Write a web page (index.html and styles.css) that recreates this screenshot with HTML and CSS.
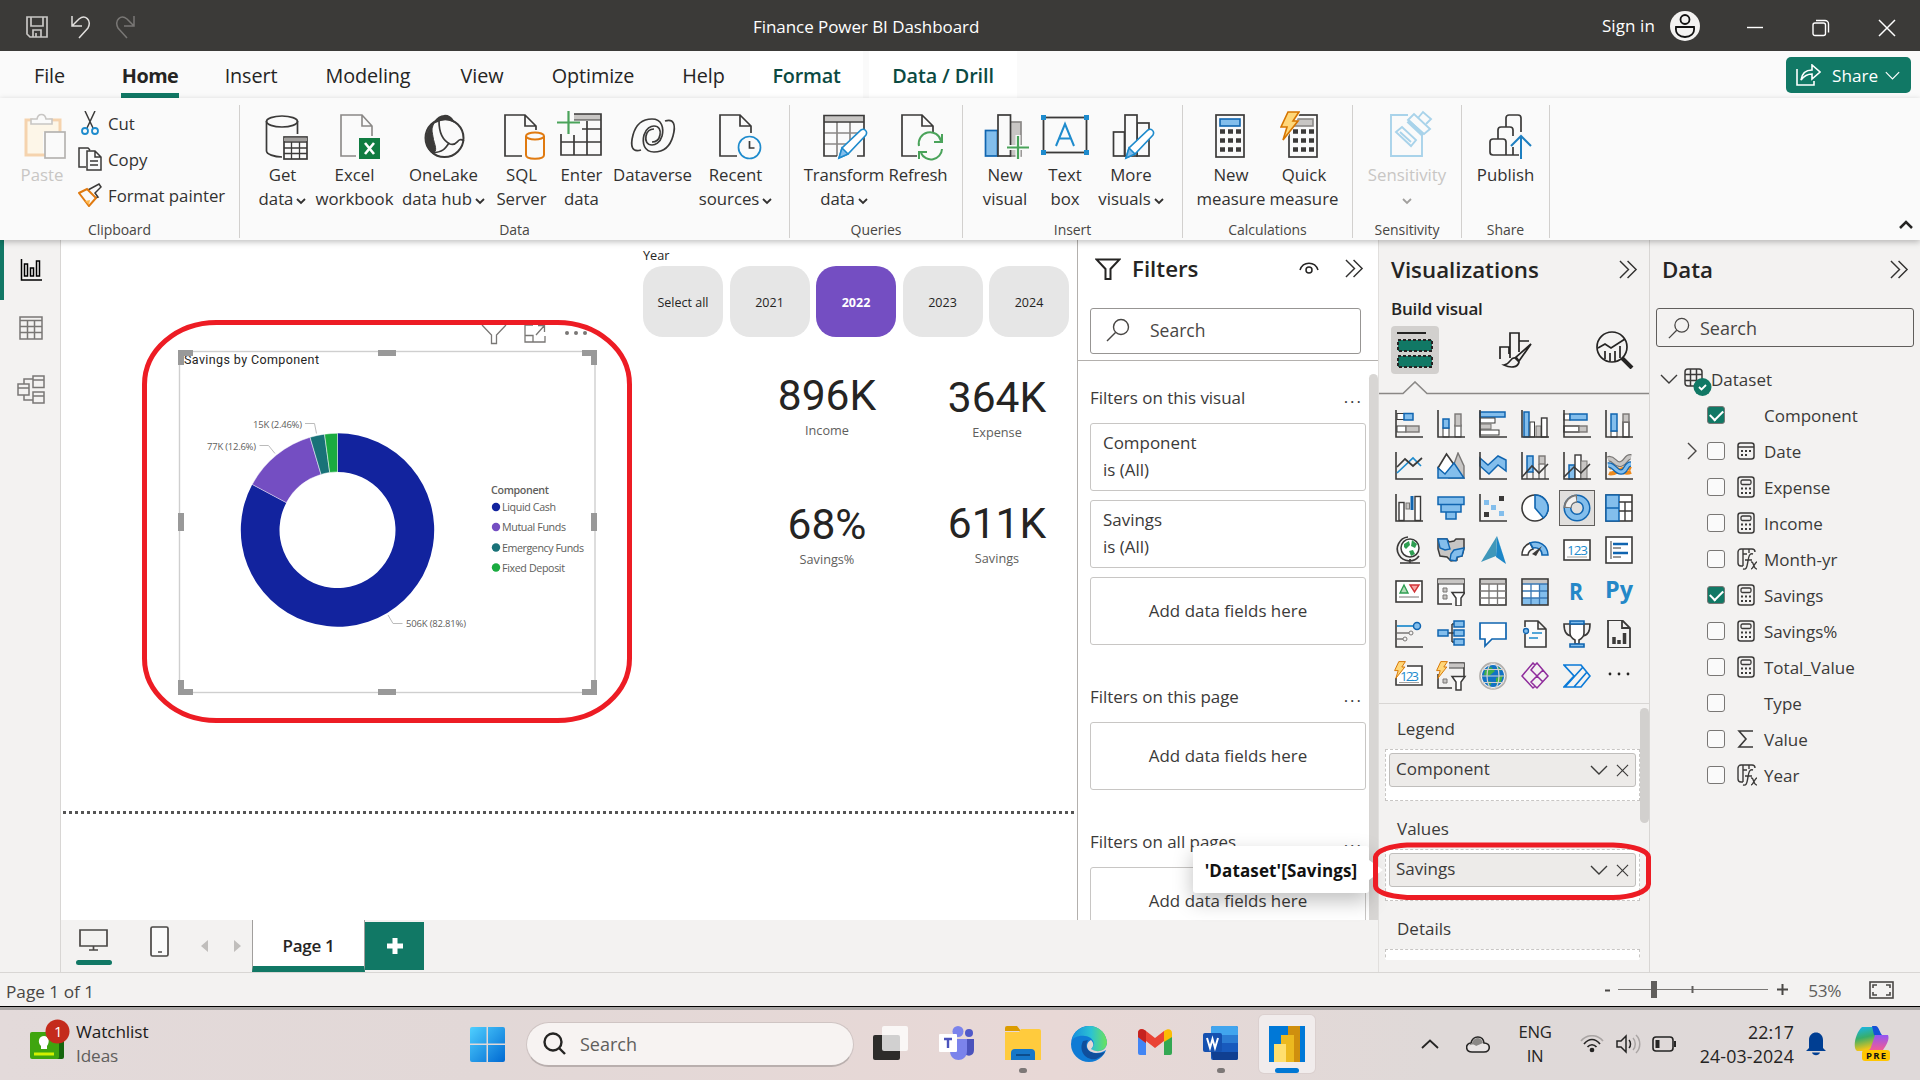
FILE: index.html
```html
<!DOCTYPE html>
<html lang="en">
<head>
<meta charset="utf-8">
<title>Finance Power BI Dashboard</title>
<link rel="stylesheet" href="styles.css">
</head>
<body>
<svg class="defs" width="0" height="0">
  <symbol id="chev" viewBox="0 0 18 10"><path d="M1 1l8 8 8-8" fill="none" stroke="currentColor" stroke-width="1.4"/></symbol>
  <symbol id="chev-s" viewBox="0 0 10 8"><path d="M1 2l4 4 4-4" fill="none" stroke="currentColor" stroke-width="1.8"/></symbol>
  <symbol id="dbl" viewBox="0 0 20 20"><path d="M1 1l9 9-9 9M9 1l9 9-9 9" fill="none" stroke="currentColor" stroke-width="1.5"/></symbol>
  <symbol id="mag" viewBox="0 0 24 24"><circle cx="15" cy="9" r="7.5" fill="none" stroke="currentColor" stroke-width="1.4"/><path d="M9.500 14.500L1 23" stroke="currentColor" stroke-width="1.4"/></symbol>
  <symbol id="x" viewBox="0 0 14 14"><path d="M1 1l12 12M13 1L1 13" fill="none" stroke="currentColor" stroke-width="1.2"/></symbol>
  <symbol id="axes" viewBox="0 0 28 28"><path d="M1 0V27H28" fill="none" stroke="#3b3a39" stroke-width="1.600"/></symbol>
  <symbol id="calc" viewBox="0 0 18 22"><rect x="1" y="1" width="16" height="20" rx="2.500" fill="none" stroke="#3b3a39" stroke-width="1.500"/><rect x="4" y="4" width="10" height="4.500" rx="1.500" fill="none" stroke="#3b3a39" stroke-width="1.300"/><path d="M4 12.500h2m2 0h2m2 0h2M4 17h2m2 0h2m2 0h2" stroke="#3b3a39" stroke-width="2.200"/></symbol>
  <symbol id="fx" viewBox="0 0 22 22"><path d="M6 18H4a3 3 0 0 1-3-3V4a3 3 0 0 1 3-3H15a3 3 0 0 1 3 3M6 1V18M6 6h4M12 1v4" fill="none" stroke="#3b3a39" stroke-width="1.400"/><path d="M6 21c4 1 4-3 5-8 .8-5 1.500-8 5-7M8 12h7M14 14c3-1 2 7 6 7M20 14c-2 0-4 7-6 7" fill="none" stroke="#3b3a39" stroke-width="1.400"/></symbol>
  <symbol id="pencil" viewBox="0 0 32 32"><path d="M2 30l3-10L24 2c3-2 7 1 5 5L11 26Z" fill="#fff" stroke="#1e8bcd" stroke-width="1.600"/><path d="M2 30l3-10 6 6Z" fill="#83beec" stroke="#1e8bcd" stroke-width="1.500"/></symbol>
  <symbol id="bolt" viewBox="0 0 20 30"><path d="M8 1H19L13 10H18L3 29L7 16H1Z" fill="#ffd779" stroke="#d67500" stroke-width="1.600"/></symbol>
  <symbol id="calc-l" viewBox="0 0 30 44"><rect x="1" y="1" width="28" height="42" fill="#fafafa" stroke="#3b3a39" stroke-width="1.700"/><path d="M5 17.500h5m3 0h5m3 0h5M5 26.500h5m3 0h5m3 0h5M5 35.500h5m3 0h5m3 0h5" stroke="#3b3a39" stroke-width="4.500"/></symbol>
</svg>

<header class="titlebar">
  <div class="quick">
    <svg width="24" height="24" viewBox="0 0 24 24" fill="none" stroke="#c8c6c4" stroke-width="1.700"><path d="M2 2H22V22H5L2 19ZM6 2V11H18V2M8 22V15H16V22M11 18v4"/></svg>
    <svg width="24" height="24" viewBox="0 0 24 24" fill="none" stroke="#e1dfdd" stroke-width="1.500"><path d="M2 1V11H12M2 11L9 4C15 -1 22 5 18 13L9 23"/></svg>
    <svg class="redo" width="24" height="24" viewBox="0 0 24 24" fill="none" stroke="#797775" stroke-width="1.500"><path d="M20 1V11H10M20 11L13 4C7 -1 0 5 4 13L13 23"/></svg>
  </div>
  <div class="doc-title">Finance Power BI Dashboard</div>
  <div class="account"><span>Sign in</span>
    <svg width="30" height="30" viewBox="0 0 30 30"><circle cx="15" cy="15" r="15" fill="#f3f2f1"/><g fill="none" stroke="#111" stroke-width="1.800"><circle cx="15" cy="8.500" r="4.500"/><path d="M6 16H24C25 23 20 26 15 26S5 23 6 16Z"/></g></svg></div>
  <div class="winctl">
    <svg width="18" height="18" viewBox="0 0 18 18"><path d="M1 8.500H17" stroke="#fff" stroke-width="1.400"/></svg>
    <svg width="18" height="18" viewBox="0 0 18 18" fill="none" stroke="#fff" stroke-width="1.400"><rect x="1" y="4" width="12.500" height="12.500" rx="2"/><path d="M4 1.500H13a3.500 3.500 0 0 1 3.500 3.500V13.500"/></svg>
    <svg width="18" height="18" viewBox="0 0 18 18"><path d="M1 1L17 17M17 1L1 17" stroke="#fff" stroke-width="1.500"/></svg>
  </div>
</header>

<nav class="tabs">
  <span class="tab t-file">File</span><span class="tab t-home"><b>Home</b></span><span class="tab t-insert">Insert</span><span class="tab t-model">Modeling</span><span class="tab t-view">View</span><span class="tab t-opt">Optimize</span><span class="tab t-help">Help</span><span class="tab t-format ctx">Format</span><span class="tab t-drill ctx">Data / Drill</span>
  <div class="share-btn"><svg width="25" height="22" viewBox="0 0 25 22" fill="none" stroke="#fff" stroke-width="1.600"><path d="M1 5V21H18V17M5 16C6 9 10 6 16 6V1L24 8L16 15V10C11 10 8 12 5 16Z"/></svg><span>Share</span><svg width="15" height="9"><use href="#chev"/></svg></div>
</nav>

<section class="ribbon">
  <div class="group g-clip">
    <div class="tools">
      <div class="btn b-paste off"><svg viewBox="0 0 54 54"><path d="M10 12H44V22H28V44H10Z" fill="#fdf6e8"/><path d="M18 10H11V45H30M34 10H45V22" fill="none" stroke="#f5d3ae" stroke-width="3"/><path d="M16 14V9H22C23 3 30 3 31 9H37V14Z" fill="#fafafa" stroke="#c8c6c4" stroke-width="1.600"/><rect x="30" y="22" width="20" height="26" fill="#fafafa" stroke="#b5b3b1" stroke-width="1.700"/></svg><span>Paste</span></div>
      <div class="cliplist">
        <div><svg width="24" height="24" viewBox="0 0 24 24" fill="none" stroke="#3b3a39" stroke-width="1.500"><path d="M7 0L15 17M17 0L9 17"/><g stroke="#1e8bcd" stroke-width="1.800"><circle cx="7" cy="20" r="3"/><circle cx="17" cy="20" r="3"/></g></svg>Cut</div>
        <div><svg width="24" height="24" viewBox="0 0 24 24" fill="none" stroke="#3b3a39" stroke-width="1.500"><path d="M8 20H1V1H10L12 3M9 4H17L23 10V23H9ZM17 4V10H23M12 14H20M12 18H20"/></svg>Copy</div>
        <div><svg width="24" height="24" viewBox="0 0 24 24" fill="#fafafa" stroke="#3b3a39" stroke-width="1.500"><path d="M10 7L21 1L23 4L17 10L20 14L13 16Z"/><path d="M1 10L9 6L18 15L11 23Z" stroke="#e07a10" stroke-width="2"/><path d="M7 18l5-1-1 5Z" fill="#ffb74d" stroke="none"/></svg>Format painter</div>
      </div>
    </div>
    <div class="cap">Clipboard</div>
  </div>

  <div class="group g-data">
    <div class="tools">
      <div class="btn w70"><svg viewBox="0 0 54 54" fill="none" stroke="#3b3a39" stroke-width="1.700"><ellipse cx="26" cy="11.500" rx="15.500" ry="5.500"/><path d="M10.500 11V41C10.500 44 18 47 26 47M41.500 11V24"/><rect x="28" y="27" width="23" height="22" fill="#fafafa"/><path d="M28 29.500H51" stroke="#a19f9d" stroke-width="3.500"/><path d="M28 32H51M28 38H51M28 43.500H51M35.500 32V49M43.500 32V49" stroke-width="1.300"/></svg><span>Get<br>data<svg class="dd"><use href="#chev-s"/></svg></span></div>
      <div class="btn w74"><svg viewBox="0 0 54 54"><path d="M28 46H13V5H34L44 16V26M34 5V16H44" fill="none" stroke="#8a8886" stroke-width="1.600"/><rect x="31" y="28" width="21" height="21" fill="#107c41"/><path d="M37 33l9 11M46 33l-9 11" stroke="#fff" stroke-width="2.600"/></svg><span>Excel<br>workbook</span></div>
      <div class="btn w104"><svg viewBox="2 0 54 54"><circle cx="29.500" cy="28" r="19" fill="#fafafa" stroke="#3b3a39" stroke-width="2"/><path d="M19 13A20 20 0 0 0 17 43C24 42 19 34 18 27S16 20 19 13Z" fill="#3b3a39" stroke="#3b3a39"/><path d="M20 12C25 4 34 4 38 11C32 8 26 9 20 12Z" fill="#3b3a39" stroke="#3b3a39" stroke-width="2"/><path d="M24 11C24 25 29 31 35 34C43 37 42 26 49 31M17 43C28 42 30 39 34 33" fill="none" stroke="#3b3a39" stroke-width="1.700"/></svg><span>OneLake<br>data hub<svg class="dd"><use href="#chev-s"/></svg></span></div>
      <div class="btn w52"><svg viewBox="1 0 54 54" fill="none" stroke="#3b3a39" stroke-width="1.700"><path d="M28 46H11V5H31L42 16V20M31 5V16H42"/><g fill="#fafafa" stroke="#e07a10" stroke-width="2"><path d="M32 26V45C32 50 50 50 50 45V26"/><ellipse cx="41" cy="26" rx="9" ry="3.500"/></g></svg><span>SQL<br>Server</span></div>
      <div class="btn w68"><svg viewBox="1 0 54 54" fill="none" stroke="#3b3a39" stroke-width="1.700"><path d="M20 7H47" stroke="#c8c6c4" stroke-width="6"/><path d="M7 24V45H47V4H20M7 32H47M20 25V45M33 11V45M28 19H47" /><path d="M20 10H47" stroke-width="1"/><path d="M14.500 1V24M3 12.500H26" stroke="#4aa35a" stroke-width="2.200"/></svg><span>Enter<br>data</span></div>
      <div class="btn w74"><svg viewBox="0 0 54 54" fill="none" stroke="#3b3a39" stroke-width="1.700"><path d="M15 40C6 43 4 36 7 25C10 14 17 9 26 9C36 9 38 18 36 26C34 33 29 35 26 35C21 35 19 31 20 26C21 21 24 19 28 19"/><path d="M39 11C48 8 50 15 47 26C44 37 37 42 28 42C18 42 16 33 18 25C20 18 25 16 28 16C33 16 35 20 34 25C33 30 30 32 26 32"/></svg><span>Dataverse</span></div>
      <div class="btn w92"><svg viewBox="1 0 54 54" fill="none" stroke="#3b3a39" stroke-width="1.700"><path d="M29 46H12V5H32L43 16V23M32 5V16H43"/><circle cx="41.500" cy="37.500" r="11" fill="#fafafa" stroke="#1e8bcd"/><path d="M41.500 31V38H46.500"/></svg><span>Recent<br>sources<svg class="dd"><use href="#chev-s"/></svg></span></div>
    </div>
    <div class="cap">Data</div>
  </div>

  <div class="group g-query">
    <div class="tools">
      <div class="btn w80"><svg viewBox="0 0 54 54" fill="none" stroke="#3b3a39" stroke-width="1.700"><path d="M7 8.500H47" stroke="#c8c6c4" stroke-width="6"/><path d="M7 23H47M7 34H40M20 12V46M33 12V40" stroke="#8a8886"/><path d="M20 46H7V5.500H47V46H40M7 12H47"/><use href="#pencil" x="20" y="18" width="32" height="32"/></svg><span>Transform<br>data<svg class="dd"><use href="#chev-s"/></svg></span></div>
      <div class="btn w68"><svg viewBox="0 0 54 54" fill="none" stroke="#3b3a39" stroke-width="1.700"><path d="M26 46H11V5H31L42 16V22M31 5V16H42"/><g stroke="#4aa35a" stroke-width="2"><path d="M28 36A11 11 0 0 1 50 31M51 24V32H43M51 39A11 11 0 0 1 30 43M28 49V42H36"/></g></svg><span>Refresh</span></div>
    </div>
    <div class="cap">Queries</div>
  </div>

  <div class="group g-insert">
    <div class="tools">
      <div class="btn w62"><svg viewBox="0 0 54 54" stroke="#3b3a39" stroke-width="1.700" fill="#fafafa"><rect x="7.500" y="20.500" width="12" height="25.500" fill="#83beec" stroke="#1065b0"/><rect x="32" y="12" width="11" height="34" fill="#c8c6c4" stroke="#8a8886"/><rect x="20" y="5" width="12.500" height="41"/><path d="M40 25V49M28 37.500H52" stroke="#fafafa" stroke-width="5"/><path d="M40 26V49M29 37.500H51" stroke="#4aa35a" stroke-width="2.200"/></svg><span>New<br>visual</span></div>
      <div class="btn w58"><svg viewBox="0 0 54 54" fill="none" stroke="#3b3a39" stroke-width="1.800"><rect x="5.500" y="7.500" width="43" height="35"/><path d="M3 5h5v5H3ZM46 5h5v5h-5ZM3 40h5v5H3ZM46 40h5v5h-5Z" fill="#1e8bcd" stroke="none"/><path d="M18 36L27 14L36 36M21 28.500H33" stroke="#1e8bcd" stroke-width="2"/></svg><span>Text<br>box</span></div>
      <div class="btn w74"><svg viewBox="0 0 54 54" stroke="#3b3a39" stroke-width="1.700" fill="#fafafa"><rect x="9.500" y="22" width="11" height="24"/><rect x="33" y="13" width="12" height="33"/><rect x="21" y="5" width="12" height="41"/><use href="#pencil" x="20" y="18" width="32" height="32"/></svg><span>More<br>visuals<svg class="dd"><use href="#chev-s"/></svg></span></div>
    </div>
    <div class="cap">Insert</div>
  </div>

  <div class="group g-calc">
    <div class="tools">
      <div class="btn w73"><svg viewBox="0 0 54 54"><use href="#calc-l" x="11" y="4" width="30" height="44"/><rect x="16" y="9" width="20" height="7" fill="#83beec" stroke="#1065b0" stroke-width="1.600"/></svg><span>New<br>measure</span></div>
      <div class="btn w73"><svg viewBox="1 0 54 54"><use href="#calc-l" x="12" y="4" width="30" height="44"/><rect x="17" y="9" width="20" height="7" fill="#c8c6c4" stroke="#8a8886" stroke-width="1.600"/><path d="M8 3H24L19 14L9 32L6 24Z" fill="#fafafa"/><use href="#bolt" x="4" y="1" width="20" height="30"/></svg><span>Quick<br>measure</span></div>
    </div>
    <div class="cap">Calculations</div>
  </div>

  <div class="group g-sens">
    <div class="tools">
      <div class="btn w108 off"><svg viewBox="0 0 54 54" fill="none" stroke="#a9d3ea" stroke-width="1.900"><path d="M28 5H11V46H42V25M16 22L22 17L36 30L31 36Z M20 22L31 32"/><path d="M28 10L34 4L50 19L44 24Z" fill="#fafafa"/><path d="M28 11L43 25" stroke-width="4"/><path d="M38 8L43 2L51 9L46 14"/></svg><span>Sensitivity<br><svg class="dd solo"><use href="#chev-s"/></svg></span></div>
    </div>
    <div class="cap">Sensitivity</div>
  </div>

  <div class="group g-share">
    <div class="tools">
      <div class="btn w86"><svg viewBox="0 0 54 54" fill="none" stroke="#3b3a39" stroke-width="1.700"><path d="M27 17V8a3 3 0 0 1 3-3h9a3 3 0 0 1 3 3V22M19 29V20a3 3 0 0 1 3-3h9a3 3 0 0 1 3 3V26M34 37V45"/><path d="M40 45H14a3 3 0 0 1-3-3V32a3 3 0 0 1 3-3H24a3 3 0 0 1 3 3V45"/><path d="M42 49V26M32 36L42 26L52 36" stroke="#1e7fc0" stroke-width="2"/></svg><span>Publish</span></div>
    </div>
    <div class="cap">Share</div>
  </div>
  <svg class="collapse" width="14" height="9" viewBox="0 0 14 9"><path d="M1 8l6-6 6 6" fill="none" stroke="#252423" stroke-width="2.500"/></svg>
</section>

<main class="main">
  <aside class="rail">
    <div class="rail-item on"><svg width="22" height="22" viewBox="0 0 22 22" fill="none" stroke="#000" stroke-width="1.500"><path d="M1.500 0V21H22"/><rect x="4.500" y="5" width="3" height="12"/><rect x="10.500" y="9" width="3" height="8"/><rect x="16.500" y="2" width="3" height="15"/></svg></div>
    <div class="rail-item"><svg width="24" height="24" viewBox="0 0 24 24" fill="none" stroke="#797775" stroke-width="1.500"><path d="M1 1H23V23H1ZM1 4.500H23M1 10.500H23M1 16.500H23M8.500 4.500V23M15.500 4.500V23"/></svg></div>
    <div class="rail-item"><svg width="28" height="29" viewBox="0 0 28 29" fill="none" stroke="#797775" stroke-width="1.500"><path d="M16 1H27V12.500H16ZM16 5H27M16 17H27V28H16ZM16 21H27M1 9H12V20H1ZM1 13H12M7 9V4H16M7 20V25H16"/></svg></div>
  </aside>

  <section class="center">
    <div class="workspace">
      <div class="canvas">
        <div class="slicer">
          <div class="slicer-title">Year</div>
          <div class="slicer-row"><span>Select all</span><span>2021</span><span class="on">2022</span><span>2023</span><span>2024</span></div>
        </div>
        <div class="kpi k1"><strong>896K</strong><span>Income</span></div>
        <div class="kpi k2"><strong>364K</strong><span>Expense</span></div>
        <div class="kpi k3"><strong>68%</strong><span>Savings%</span></div>
        <div class="kpi k4"><strong>611K</strong><span>Savings</span></div>
        <svg class="donut" width="500" height="410" viewBox="138 316 500 410">
          <g fill="none" stroke="#797775" stroke-width="1.300"><path d="M482 325L491.500 335V343.500H496.500V335L506 325"/><path d="M533 325H525V342H545V336M525 335.500H533V342M536 335L544 326M538 325.500H544.500V332"/></g>
          <g fill="#797775"><circle cx="567" cy="333" r="2"/><circle cx="576" cy="333" r="2"/><circle cx="585" cy="333" r="2"/></g>
          <rect x="179.500" y="351.500" width="415.500" height="341" fill="none" stroke="#cfcfcf" stroke-width="1.400"/>
          <text x="184" y="364" class="v-title" textLength="135">Savings by Component</text>
          <g fill="#999"><path d="M178 350h15v6h-9v9h-6ZM597 350h-15v6h9v9h6ZM178 695h15v-6h-9v-9h-6ZM597 695h-15v-6h9v-9h6Z"/><path d="M378 350h18v6h-18ZM378 689h18v6h-18ZM178 513h6v18h-6ZM591 513h6v18h-6Z"/></g>
          <g transform="translate(337.500 530)" stroke-width=".5">
            <path d="M0-96.700A96.700 96.700 0 1 1-85.300-45.550L-51.160-27.320A58 58 0 1 0 0-58Z" fill="#12239e"/>
            <path d="M-85.300-45.550A96.700 96.700 0 0 1-27.460-92.720L-16.470-55.610A58 58 0 0 0-51.160-27.320Z" fill="#744ec2" stroke="#fff"/>
            <path d="M-27.460-92.720A96.700 96.700 0 0 1-12.960-95.830L-7.770-57.480A58 58 0 0 0-16.470-55.610Z" fill="#197278" stroke="#fff"/>
            <path d="M-12.960-95.830A96.700 96.700 0 0 1 0-96.700V-58A58 58 0 0 0-7.770-57.480Z" fill="#1aab40" stroke="#fff"/>
          </g>
          <g fill="none" stroke="#bbb" stroke-width="1"><path d="M305 423.500h9.500l2 10M259.500 445.500h9l6.500 8M388 615l5 8.500h9.500"/></g>
          <g class="lbl"><text x="253" y="428" textLength="49">15K (2.46%)</text><text x="207" y="450" textLength="49">77K (12.6%)</text><text x="406" y="627" textLength="60">506K (82.81%)</text></g>
          <g class="lgd"><text x="491" y="494" class="b" textLength="58">Component</text><text x="502" y="511" textLength="54">Liquid Cash</text><text x="502" y="531" textLength="64">Mutual Funds</text><text x="502" y="552" textLength="82">Emergency Funds</text><text x="502" y="572" textLength="63">Fixed Deposit</text></g>
          <circle cx="496" cy="507" r="4.200" fill="#12239e"/><circle cx="496" cy="527" r="4.200" fill="#744ec2"/><circle cx="496" cy="547.500" r="4.200" fill="#197278"/><circle cx="496" cy="567.500" r="4.200" fill="#1aab40"/>
          <rect x="144.500" y="322.500" width="485" height="398" rx="72" ry="62" fill="none" stroke="#ed1c24" stroke-width="5"/>
        </svg>
        <div class="page-edge"></div>
      </div>

      <aside class="filters">
        <div class="f-head">
          <svg width="26" height="22" viewBox="0 0 26 22"><path d="M1.500 1.500H24.500L15.500 11V21H10.500V11Z" fill="none" stroke="#252423" stroke-width="2"/></svg>
          <h2>Filters</h2>
          <svg class="eye" width="20" height="14" viewBox="0 0 20 14" fill="none" stroke="#252423" stroke-width="1.500"><path d="M1 8C4 -1 16 -1 19 8"/><circle cx="10" cy="8" r="3"/></svg>
          <svg width="19" height="19"><use href="#dbl"/></svg>
        </div>
        <div class="f-search"><svg width="24" height="24"><use href="#mag"/></svg>Search</div>
        <div class="f-body">
          <div class="f-title"><span>Filters on this visual</span><i>...</i></div>
          <div class="card">Component<br>is (All)</div>
          <div class="card">Savings<br>is (All)</div>
          <div class="card add">Add data fields here</div>
          <div class="f-title gap"><span>Filters on this page</span><i>...</i></div>
          <div class="card add">Add data fields here</div>
          <div class="f-title gap"><span>Filters on all pages</span><i>...</i></div>
          <div class="card add">Add data fields here</div>
        </div>
      </aside>
    </div>
    <div class="pagebar">
      <svg class="desk" width="36" height="38" viewBox="0 0 36 38"><path d="M4 2H31V18H4ZM17.500 18V22M13 22H22" fill="none" stroke="#4a4846" stroke-width="1.700"/><rect y="32" width="36" height="5" rx="2.500" fill="#117865"/></svg>
      <svg class="phone" width="19" height="31" viewBox="0 0 19 31"><rect x="1" y="1" width="17" height="29" rx="1.500" fill="#fafafa" stroke="#4a4846" stroke-width="1.700"/><path d="M8 26h4" stroke="#4a4846" stroke-width="1.500"/></svg>
      <svg class="prev" width="40" height="12" viewBox="0 0 40 12" fill="#c0bebc"><path d="M7 0V12L0 6ZM33 0V12L40 6Z"/></svg>
      <div class="page-tab">Page 1</div>
      <div class="page-add"><svg width="18" height="18"><path d="M9 1V17M1 9H17" stroke="#fff" stroke-width="5"/></svg></div>
    </div>
  </section>

  <aside class="viz">
    <div class="p-head"><h2>Visualizations</h2><svg width="19" height="19"><use href="#dbl"/></svg></div>
    <div class="build">Build visual</div>
    <div class="modes">
      <div class="mode on"><svg width="38" height="38" viewBox="0 0 38 38"><path d="M1 2H30" stroke="#252423" stroke-width="2"/><g fill="#117865" stroke="#252423" stroke-width="2" stroke-dasharray="3 2"><rect x="2" y="9" width="34" height="11"/><rect x="2" y="25" width="34" height="11"/></g></svg></div>
      <div class="mode"><svg width="34" height="36" viewBox="0 0 34 36" fill="#f3f2f1" stroke="#252423" stroke-width="1.700"><path d="M1 27V15H10V22M11 26V1H20V20M20 9H30" fill="none"/><path d="M32 12L17 25L20 29L32 12ZM16 26C11 25 12 32 5 33C11 36 19 36 20 30Z"/></svg></div>
      <div class="mode"><svg width="38" height="38" viewBox="0 0 38 38" fill="none" stroke="#252423" stroke-width="1.700"><circle cx="16" cy="16" r="15"/><path d="M2 17L9 13L15 17L29 8M9 20V28M14 22V30M19 20V30M24 15V27"/><path d="M26 27L36 37" stroke-width="4"/></svg></div>
    </div>
    <svg class="notch" width="270" height="14" viewBox="0 0 270 14"><path d="M0 12.500H24L36 1L48 12.500H270" fill="none" stroke="#8a8886" stroke-width="1.600"/></svg>
    <div class="icons">
      <svg viewBox="0 0 28 28"><rect x="2" y="3.500" width="8" height="6" fill="#fff" stroke="#3b3a39"/><rect x="9" y="3.500" width="9" height="6.500" fill="#83beec" stroke="#1065b0" stroke-width="1.500"/><rect x="2" y="16" width="9" height="6" fill="#fff" stroke="#3b3a39"/><rect x="11" y="16" width="13" height="6" fill="#c8c6c4" stroke="#797775" stroke-width="1.400"/><use href="#axes"/></svg>
      <svg viewBox="0 0 28 28"><rect x="6" y="18" width="6" height="9" fill="#fff" stroke="#3b3a39"/><rect x="6" y="9" width="6" height="9" fill="#83beec" stroke="#1065b0" stroke-width="1.500"/><rect x="18" y="15" width="6" height="12" fill="#fff" stroke="#3b3a39"/><rect x="18" y="4" width="6" height="12" fill="#c8c6c4" stroke="#797775" stroke-width="1.400"/><use href="#axes"/></svg>
      <svg viewBox="0 0 28 28"><rect x="1" y="2" width="25" height="5" fill="#83beec" stroke="#1065b0" stroke-width="1.500"/><rect x="1" y="8" width="15" height="5" fill="#fff" stroke="#3b3a39"/><rect x="1" y="14" width="11" height="5" fill="#c8c6c4" stroke="#797775"/><rect x="1" y="20" width="19" height="5" fill="#fff" stroke="#3b3a39"/><use href="#axes"/></svg>
      <svg viewBox="0 0 28 28"><rect x="3" y="2" width="5" height="25" fill="#83beec" stroke="#1065b0" stroke-width="1.500"/><rect x="9" y="12" width="4.500" height="15" fill="#fff" stroke="#3b3a39"/><rect x="15" y="16" width="5" height="11" fill="#c8c6c4" stroke="#797775"/><rect x="20.500" y="8" width="5.500" height="19" fill="#fff" stroke="#3b3a39" stroke-width="1.400"/><use href="#axes"/></svg>
      <svg viewBox="0 0 28 28"><rect x="1" y="4" width="6" height="6" fill="#fff" stroke="#3b3a39"/><rect x="7" y="4" width="17" height="6" fill="#83beec" stroke="#1065b0" stroke-width="1.500"/><rect x="1" y="16" width="15" height="6" fill="#fff" stroke="#3b3a39" stroke-width="1.400"/><rect x="16" y="16" width="8" height="6" fill="#c8c6c4" stroke="#797775" stroke-width="1.400"/><use href="#axes"/></svg>
      <svg viewBox="0 0 28 28"><rect x="6" y="21" width="6" height="6" fill="#fff" stroke="#3b3a39"/><rect x="6" y="4" width="6" height="17" fill="#83beec" stroke="#1065b0" stroke-width="1.500"/><rect x="18" y="12" width="6" height="15" fill="#fff" stroke="#3b3a39" stroke-width="1.400"/><rect x="18" y="4" width="6" height="8" fill="#c8c6c4" stroke="#797775" stroke-width="1.400"/><use href="#axes"/></svg>

      <svg viewBox="0 0 28 28" fill="none"><use href="#axes"/><path d="M2 21L18 6L26 14" stroke="#1e8bcd" stroke-width="1.700"/><path d="M2 15L10 7L18 14L27 6" stroke="#3b3a39" stroke-width="1.700"/></svg>
      <svg viewBox="0 0 28 28"><path d="M12 26L21 1L27 14V26Z" fill="#c8c6c4" stroke="#797775" stroke-width="1.400"/><path d="M1 16L9.500 2L18 14L9 25Z" fill="#fff" stroke="#3b3a39" stroke-width="1.600"/><path d="M1 16L8 22L17 11L27 26H1Z" fill="#83beec" stroke="#1065b0" stroke-width="1.500"/></svg>
      <svg viewBox="0 0 28 28"><path d="M1 6L9 13L19 4L27 8V19L19 13L10 22L1 14Z" fill="#83beec" stroke="#1065b0" stroke-width="1.500"/><use href="#axes"/></svg>
      <svg viewBox="0 0 28 28" fill="none"><rect x="6" y="4" width="6" height="16" fill="#83beec" stroke="#1065b0" stroke-width="1.500"/><path d="M6 20V27M12 20V27M18 12V27M24 12V27" stroke="#3b3a39"/><rect x="18" y="4" width="6" height="8" fill="#c8c6c4" stroke="#797775" stroke-width="1.400"/><use href="#axes"/><path d="M1 25L11 14L18 21L27 12" stroke="#3b3a39" stroke-width="1.600"/></svg>
      <svg viewBox="0 0 28 28" fill="none"><rect x="6" y="13" width="6" height="14" fill="#83beec" stroke="#1065b0" stroke-width="1.500"/><rect x="12" y="3" width="6" height="24" fill="#fff" stroke="#3b3a39" stroke-width="1.400"/><rect x="18" y="9" width="6" height="18" fill="#c8c6c4" stroke="#797775"/><use href="#axes"/><path d="M1 25L11 15L18 21L27 12" stroke="#3b3a39" stroke-width="1.600"/></svg>
      <svg viewBox="0 0 28 28" fill="none"><path d="M4 16C11 12 16 24 26 20M4 21C10 24 17 13 26 17" stroke="#ee8a1c" stroke-width="4"/><path d="M3 7C9 5 10 14 16 12S21 4 26 5" stroke="#797775" stroke-width="6"/><path d="M3 7C9 5 10 14 16 12S21 4 26 5" stroke="#c8c6c4" stroke-width="3.500"/><path d="M3 13C9 12 10 20 16 20S20 12 26 12" stroke="#1065b0" stroke-width="5.500"/><path d="M3 13C9 12 10 20 16 20S20 12 26 12" stroke="#83beec" stroke-width="3"/><use href="#axes"/></svg>

      <svg viewBox="0 0 28 28"><rect x="4" y="8.500" width="5" height="18" fill="#fff" stroke="#3b3a39" stroke-width="1.400"/><rect x="11" y="9" width="3.500" height="6" fill="#c8c6c4" stroke="#797775"/><rect x="15.500" y="2" width="3" height="14" fill="#1065b0"/><rect x="20" y="2.500" width="5.500" height="24" fill="#fff" stroke="#3b3a39" stroke-width="1.400"/><use href="#axes"/></svg>
      <svg viewBox="0 0 28 28" fill="#83beec" stroke="#1065b0" stroke-width="1.500"><path d="M1 3H27V10.500H1ZM4 10.500H24V18H4ZM9 18H19V25H9Z"/></svg>
      <svg viewBox="0 0 28 28"><use href="#axes"/><path d="M20 2h5v5h-5ZM5 18h5v5H5Z" fill="#3b3a39"/><path d="M5 6h5v5H5ZM12 11h5v5h-5ZM20 17h5v5h-5Z" fill="#83beec"/></svg>
      <svg viewBox="0 0 28 28" stroke-width="1.600"><circle cx="14" cy="14" r="13" fill="#fff" stroke="#3b3a39"/><path d="M14 1A13 13 0 0 1 22.500 24L14 14Z" fill="#83beec" stroke="#1065b0"/></svg>
      <svg class="sel" viewBox="0 0 28 28" fill="none"><circle cx="14" cy="14" r="9.500" stroke="#1065b0" stroke-width="8"/><circle cx="14" cy="14" r="9.500" stroke="#83beec" stroke-width="5"/><path d="M4.500 14A9.500 9.500 0 0 1 14 4.500" stroke="#797775" stroke-width="8"/><path d="M5 13A9.500 9.500 0 0 1 13 4.700" stroke="#f3f2f1" stroke-width="5"/></svg>
      <svg viewBox="0 0 28 28"><rect x="1" y="1" width="26" height="26" fill="#fff" stroke="#3b3a39" stroke-width="1.600"/><path d="M1 1H14V27H1ZM1 14H14" fill="#83beec" stroke="#1065b0" stroke-width="1.500"/><path d="M14 8H27M20 8V27M20 17H27M14 17H20" fill="none" stroke="#3b3a39" stroke-width="1.400"/></svg>

      <svg viewBox="0 0 28 28" fill="none"><circle cx="15" cy="12" r="9" fill="#fff" stroke="#3b3a39" stroke-width="1.500"/><path d="M9 8L14 5L15 9L11 13L9 11ZM17 4L22 8L20 12L16 10ZM14 15L18 14L20 18L16 20Z" fill="#2f9e52"/><path d="M13 1A12 12 0 1 0 24 20M15 23V27M5 27H25" stroke="#3b3a39" stroke-width="1.700"/></svg>
      <svg viewBox="0 0 28 28"><path d="M1 3H10L12 6L17 5L19 3H27V13L25 20L20 21V24L14 25L10 21L3 20L1 13Z" fill="#c8c6c4" stroke="#3b3a39" stroke-width="1.500"/><path d="M1 3H10L13 13L8 14L3 12ZM17 14L27 12L25 20L20 21L19 25L13 24L14 18Z" fill="#83beec" stroke="#1065b0" stroke-width="1.400"/></svg>
      <svg viewBox="0 0 28 28"><path d="M18 0L27 28L17 21Z" fill="#1c86c7"/><path d="M18 0L2 26L17 20Z" fill="#3f97ba"/><path d="M18 0L21 10L25 22Z" fill="#69c2ea"/></svg>
      <svg viewBox="0 0 28 28" stroke-width="1.500"><path d="M1 19A13 13 0 0 1 9 7L12 13A7 7 0 0 0 7 19Z" fill="#fff" stroke="#3b3a39"/><path d="M9 7A13 13 0 0 1 27 19H21A7 7 0 0 0 12 12Z" fill="#83beec" stroke="#1065b0"/><path d="M11 18L21 10L15 20Z" fill="#3b3a39"/></svg>
      <svg viewBox="0 0 28 28"><rect x="1" y="4" width="26" height="20" fill="#fff" stroke="#3b3a39" stroke-width="1.600"/><text x="4" y="18.500" class="i123" textLength="21">123</text><path d="M4 21H24" stroke="#a19f9d"/></svg>
      <svg viewBox="0 0 28 28"><rect x="1" y="1" width="26" height="26" fill="#fff" stroke="#3b3a39" stroke-width="1.600"/><path d="M6 5V23" stroke="#797775" stroke-width="1.400"/><path d="M8 8H23M8 17H23" stroke="#1065b0" stroke-width="2.600"/><path d="M8 12H16M8 21H16" stroke="#797775" stroke-width="1.500"/></svg>

      <svg viewBox="0 0 28 28"><rect x="1" y="3" width="26" height="21" fill="#fff" stroke="#3b3a39" stroke-width="1.600"/><path d="M5 15L9 7L13 15Z" fill="#b5dcb9" stroke="#2f9e52" stroke-width="1.400"/><path d="M15 7H24L19.500 14Z" fill="#f7a5a5" stroke="#d13438" stroke-width="1.400"/><path d="M4 19H24" stroke="#797775"/></svg>
      <svg viewBox="0 0 28 28"><path d="M15 26H1V1H27V14" fill="#fafafa" stroke="#3b3a39" stroke-width="1.600"/><path d="M1 3.500H27" stroke="#c8c6c4" stroke-width="4"/><path d="M1 6H27" stroke="#3b3a39"/><path d="M6 10h4v4H6ZM6 17h4v4H6Z" fill="#c8c6c4" stroke="#797775"/><path d="M15 14.500H28L24 20V28H19V20Z" fill="#fff" stroke="#3b3a39" stroke-width="1.500"/></svg>
      <svg viewBox="0 0 28 28"><rect x="1" y="1" width="26" height="26" fill="#fff" stroke="#3b3a39" stroke-width="1.600"/><path d="M2 4H26" stroke="#c8c6c4" stroke-width="4"/><path d="M1 6H27M1 13H27M1 20H27M10 6V27M18.500 6V27" stroke="#797775" stroke-width="1.300"/></svg>
      <svg viewBox="0 0 28 28"><rect x="1" y="1" width="26" height="26" fill="#fff"/><path d="M18 6H27V27H1V20H18Z" fill="#83beec"/><path d="M2 4H26" stroke="#c8c6c4" stroke-width="4"/><path d="M1 6H27M1 13H27M1 20H27M10 6V27M18.500 6V27" stroke="#3a78b4" stroke-width="1.300"/><rect x="1" y="1" width="26" height="26" fill="none" stroke="#3b3a39" stroke-width="1.600"/></svg>
      <svg viewBox="0 0 28 28"><text x="6" y="22" class="ilet" textLength="14" lengthAdjust="spacingAndGlyphs">R</text></svg>
      <svg class="over" viewBox="0 0 28 28"><text x="0" y="20" class="ilet" textLength="28" lengthAdjust="spacingAndGlyphs">Py</text></svg>

      <svg viewBox="0 0 28 28" fill="none"><use href="#axes"/><path d="M2 6H18" stroke="#1e8bcd" stroke-width="1.700"/><circle cx="22" cy="6" r="3.500" fill="#83beec" stroke="#1065b0" stroke-width="1.500"/><path d="M2 13H14M2 19H8" stroke="#797775" stroke-width="1.400"/><circle cx="16" cy="13" r="2" stroke="#797775"/><circle cx="10" cy="19" r="2" stroke="#797775"/></svg>
      <svg viewBox="0 0 28 28" fill="#83beec" stroke="#1065b0" stroke-width="1.500"><path d="M11 13H17M15 4V22M15 4H18M15 22H18" fill="none" stroke="#3b3a39"/><rect x="1" y="10" width="10" height="6"/><rect x="17" y="1" width="10" height="6"/><rect x="17" y="10" width="10" height="6"/><rect x="17" y="19" width="10" height="6"/></svg>
      <svg viewBox="0 0 28 28"><path d="M1 3H27V19H13L6 26V19H1Z" fill="#fff" stroke="#1065b0" stroke-width="1.700"/></svg>
      <svg viewBox="0 0 28 28"><path d="M4 7V1H17L25 9V27H4V14M17 1V9H25" fill="#fafafa" stroke="#3b3a39" stroke-width="1.600"/><circle cx="5" cy="11" r="2.500" fill="#83beec" stroke="#1065b0" stroke-width="1.300"/><path d="M11 13H21M8 18H17" stroke="#1e8bcd" stroke-width="1.500"/></svg>
      <svg viewBox="0 0 28 28" fill="#fff" stroke="#3b3a39" stroke-width="1.600"><path d="M7 4H1C1 13 4 16 9 16M21 4H27C27 13 24 16 19 16" fill="none"/><path d="M7 4H21V13C21 17 18 19 16 20V24H12V20C10 19 7 17 7 13Z"/><path d="M7 1H21V4H7ZM7 24H21V27H7Z" fill="#83beec" stroke="#1065b0"/></svg>
      <svg viewBox="0 0 28 28"><path d="M3 0H17L25 8V28H3ZM17 0V8H25" fill="#f3f2f1" stroke="#3b3a39" stroke-width="1.800"/><path d="M9 17V24M14 20V24M19.500 13V24" stroke="#3b3a39" stroke-width="3.500"/></svg>

      <svg class="over" viewBox="0 0 28 28"><path d="M12 4H27V23H1V16" fill="#fff" stroke="#3b3a39" stroke-width="1.600"/><text x="5" y="18.500" class="i123" textLength="19">123</text><path d="M4 20.500H24" stroke="#a19f9d"/><use href="#bolt" x="-2" y="-1" width="14" height="18"/></svg>
      <svg class="over" viewBox="0 0 28 28"><path d="M15 26H1V12M12 1H27V14" fill="none" stroke="#3b3a39" stroke-width="1.600"/><path d="M12 3.500H27" stroke="#c8c6c4" stroke-width="4"/><path d="M12 6H27" stroke="#3b3a39"/><path d="M6 17h4v4H6Z" fill="#c8c6c4" stroke="#797775"/><path d="M15 14.500H28L24 20V28H19V20Z" fill="#fff" stroke="#3b3a39" stroke-width="1.500"/><use href="#bolt" x="-2" y="-1" width="14" height="18"/></svg>
      <svg viewBox="0 0 28 28" fill="none"><circle cx="14" cy="14" r="11" fill="#1172c4"/><path d="M6 8L12 5L16 9L10 14L5 13ZM17 16L24 13L22 20L17 22ZM18 4L23 8L19 9ZM8 19L13 20L11 24Z" fill="#3fae49"/><circle cx="14" cy="14" r="13" stroke="#b3b0ad" stroke-width="1.800"/><ellipse cx="14" cy="14" rx="6" ry="13" stroke="#d2d0ce" stroke-width="1.200"/><path d="M1 14H27M3 7.500H25M3 20.500H25" stroke="#d2d0ce" stroke-width="1.200"/></svg>
      <svg viewBox="0 0 28 28" fill="none" stroke="#8f2d9c" stroke-width="1.500"><path d="M14 3L16 1L27 14L16 26L14 24L12 26L1 14L12 1ZM14 3L10 8L16 14L10 20L14 24M16 14L22 8M16 14L22 20"/></svg>
      <svg viewBox="0 0 28 28" fill="none" stroke="#0a7ad8" stroke-width="1.700"><path d="M1 3H18L27 14L18 25H1L11 14ZM2 25L20 5M11 25L24 10M11 14L1 3"/></svg>
      <svg viewBox="0 0 28 28" fill="#252423"><circle cx="5" cy="12" r="1.400"/><circle cx="14" cy="12" r="1.400"/><circle cx="23" cy="12" r="1.400"/></svg>
    </div>
    <div class="wells">
      <div class="well-name">Legend</div>
      <div class="well"><div class="pill"><span>Component</span><svg width="18" height="10"><use href="#chev"/></svg><svg width="13" height="13"><use href="#x"/></svg></div></div>
      <div class="well-name">Values</div>
      <div class="well"><div class="pill"><span>Savings</span><svg width="18" height="10"><use href="#chev"/></svg><svg width="13" height="13"><use href="#x"/></svg></div></div>
      <div class="well-name">Details</div>
      <div class="well cut"></div>
    </div>
  </aside>

  <aside class="data">
    <div class="p-head"><h2>Data</h2><svg width="19" height="19"><use href="#dbl"/></svg></div>
    <div class="d-search"><svg width="22" height="22"><use href="#mag"/></svg>Search</div>
    <div class="tree">
      <div class="root"><svg class="c" width="18" height="10"><use href="#chev"/></svg><svg width="28" height="28" viewBox="0 0 28 28"><g fill="none" stroke="#3b3a39" stroke-width="1.500"><rect x="1" y="1" width="17" height="17" rx="3"/><path d="M1 6.500H18M1 12.500H18M6.500 1V18M12.500 1V18"/></g><circle cx="18.500" cy="19" r="9" fill="#117865"/><path d="M15 19l2.500 2.500 4.500-4.500" fill="none" stroke="#fff" stroke-width="1.800"/></svg><span>Dataset</span></div>
      <div class="row"><i class="tw"></i><i class="cb on"></i><i class="ic"></i>Component</div>
      <div class="row"><i class="tw"><svg width="10" height="18" viewBox="0 0 10 18"><path d="M1 1l8 8-8 8" fill="none" stroke="#484644" stroke-width="1.400"/></svg></i><i class="cb"></i><i class="ic"><svg width="18" height="18" viewBox="0 0 18 18" fill="none" stroke="#3b3a39" stroke-width="1.500"><rect x="1" y="1" width="16" height="16" rx="2.500"/><path d="M1 5H17"/><path d="M4 9h2m2 0h2m2 0h2M4 13h2m2 0h2" stroke-width="2"/></svg></i>Date</div>
      <div class="row"><i class="tw"></i><i class="cb"></i><i class="ic"><svg width="18" height="22"><use href="#calc"/></svg></i>Expense</div>
      <div class="row"><i class="tw"></i><i class="cb"></i><i class="ic"><svg width="18" height="22"><use href="#calc"/></svg></i>Income</div>
      <div class="row"><i class="tw"></i><i class="cb"></i><i class="ic"><svg width="22" height="22"><use href="#fx"/></svg></i>Month-yr</div>
      <div class="row"><i class="tw"></i><i class="cb on"></i><i class="ic"><svg width="18" height="22"><use href="#calc"/></svg></i>Savings</div>
      <div class="row"><i class="tw"></i><i class="cb"></i><i class="ic"><svg width="18" height="22"><use href="#calc"/></svg></i>Savings%</div>
      <div class="row"><i class="tw"></i><i class="cb"></i><i class="ic"><svg width="18" height="22"><use href="#calc"/></svg></i>Total_Value</div>
      <div class="row"><i class="tw"></i><i class="cb"></i><i class="ic"></i>Type</div>
      <div class="row"><i class="tw"></i><i class="cb"></i><i class="ic"><svg width="18" height="18" viewBox="0 0 18 18"><path d="M16 1H2L9 9L2 17H16" fill="none" stroke="#3b3a39" stroke-width="1.600"/></svg></i>Value</div>
      <div class="row"><i class="tw"></i><i class="cb"></i><i class="ic"><svg width="22" height="22"><use href="#fx"/></svg></i>Year</div>
    </div>
  </aside>
  <div class="tooltip">'Dataset'[Savings]</div>
  <svg class="mark" width="278" height="58" viewBox="0 0 278 58"><path d="M34 3H240C262 4 275 9 275.500 15V42C275 50 258 55 240 55.500H34C14 54 3 50 2.500 44V15C4 8 18 4 34 3Z" fill="none" stroke="#ed1c24" stroke-width="5"/></svg>
</main>

<footer class="status">
  <span class="pg">Page 1 of 1</span>
  <svg class="zoomer" width="190" height="20" viewBox="0 0 190 20"><path d="M4 10.500H9M176 9.500H187M181.500 4V15" stroke="#4a4846" stroke-width="2"/><path d="M17 9.500H167" stroke="#797775" stroke-width="1.200"/><path d="M50 1h6v17h-6Z" fill="#605e5c"/><path d="M91.500 6v7" stroke="#605e5c" stroke-width="2"/></svg>
  <span class="pct">53%</span>
  <svg width="25" height="18" viewBox="0 0 25 18" fill="none" stroke="#4a4846" stroke-width="1.600"><rect x="1" y="1" width="23" height="16"/><path d="M4 7V4H8M17 4H21V7M4 11V14H8M17 14H21V11"/></svg>
</footer>

<div class="taskbar">
  <div class="widget"><svg width="40" height="44" viewBox="0 0 40 44"><rect x="2" y="15" width="32" height="27" rx="2" fill="#16660f"/><rect x="0" y="15" width="29" height="27" rx="2" fill="#3fa50f"/><path d="M11 29C7 25 9 19 14 19S20 25 17 29V32H11Z" fill="#fff"/><path d="M4 37H24" stroke="#d2f000" stroke-width="3"/><circle cx="27.500" cy="14.500" r="12" fill="#c42b1c"/><text x="24" y="20" class="badge">1</text></svg><div><b>Watchlist</b><span>Ideas</span></div></div>
  <svg class="win" width="35" height="35" viewBox="0 0 35 35"><defs><linearGradient id="w" x2="1" y2="1"><stop stop-color="#4fd0ff"/><stop offset="1" stop-color="#0069d2"/></linearGradient></defs><path d="M0 2a2 2 0 0 1 2-2H16.500V16.500H0ZM18 0H33a2 2 0 0 1 2 2V16.500H18ZM0 18H16.500V35H2a2 2 0 0 1-2-2ZM18 18H35V33a2 2 0 0 1-2 2H18Z" fill="url(#w)"/></svg>
  <div class="t-search"><svg width="24" height="24" viewBox="0 0 24 24" fill="none" stroke="#252423" stroke-width="2.400"><circle cx="11" cy="10" r="8.500"/><path d="M17 16L23 22"/></svg>Search</div>
  <div class="apps">
    <div class="app"><svg viewBox="0 0 36 36"><rect x="0" y="9" width="27" height="25" rx="2" fill="#2d2c2a"/><rect x="9" y="0" width="26" height="25" rx="2" fill="#fff" opacity=".78"/></svg></div>
    <div class="app"><svg viewBox="0 0 36 36"><circle cx="30" cy="7" r="4" fill="#5059c9"/><path d="M26 13H35V24C35 30 29 31 26 28Z" fill="#4b53bc"/><circle cx="19" cy="5.500" r="5.500" fill="#7b83eb"/><path d="M11 13H28V25C28 37 11 37 11 25Z" fill="#7b83eb"/><rect y="8" width="18" height="18" rx="1" fill="#fff"/><path d="M5 13H13M9 13V22" stroke="#4b53bc" stroke-width="2.400"/></svg></div>
    <div class="app run"><svg viewBox="0 0 36 36"><path d="M0 2a2 2 0 0 1 2-2H12L16 5H0Z" fill="#dc9c00"/><path d="M0 6H14L16 3H34a2 2 0 0 1 2 2V34H0Z" fill="#ffcb3d"/><path d="M6 34V27a4 4 0 0 1 4-4H26a4 4 0 0 1 4 4V34Z" fill="#1677c8"/><path d="M11 29H25" stroke="#0c4d8c" stroke-width="2"/></svg></div>
    <div class="app"><svg viewBox="0 0 36 36"><defs><linearGradient id="e"><stop stop-color="#168fdf"/><stop offset=".55" stop-color="#2cc3d2"/><stop offset="1" stop-color="#6be35a"/></linearGradient></defs><circle cx="18" cy="18" r="18" fill="#0f7bd5"/><path d="M1 14C4-4 33-6 36 16C36 26 24 27 20 23C25 19 23 11 14 10C7 9 3 12 1 14Z" fill="url(#e)"/><path d="M12 15C7 25 15 35 25 33C30 31 33 28 34 26C22 30 11 24 17 14Z" fill="#104f9c"/><path d="M20 14C14 17 14 26 25 27C29 27 32 26 35 24L36 26C38 20 36 18 36 18C34 27 24 26 20 23C23 20 23 17 20 14Z" fill="#e4d8d7"/></svg></div>
    <div class="app"><svg viewBox="0 0 36 36"><path d="M1 10V27a2 2 0 0 0 2 2H9V12Z" fill="#4285f4"/><path d="M27 12V29H33a2 2 0 0 0 2-2V10Z" fill="#34a853"/><path d="M1 7C1 2 6 2 9 5L18 12L27 5V15L18 22L9 15V17L1 11Z" fill="#ea4335"/><path d="M1 7C1 3 5 2 9 5V17L1 11Z" fill="#c5221f"/><path d="M35 7C35 3 31 2 27 5V16L35 11Z" fill="#fbbc04"/></svg></div>
    <div class="app run"><svg viewBox="0 0 36 36"><rect x="8" y="0" width="27" height="34" rx="2" fill="#185abd"/><path d="M8 2a2 2 0 0 1 2-2H33a2 2 0 0 1 2 2V9H8Z" fill="#41a5ee"/><path d="M8 9H35V17H8Z" fill="#2b7cd3"/><path d="M8 26H35V32a2 2 0 0 1-2 2H10Z" fill="#103f91"/><rect y="7" width="19" height="19" rx="2" fill="#1551b0"/><path d="M4 12L7 22L9.500 13L12 22L15 12" fill="none" stroke="#fff" stroke-width="2"/></svg></div>
    <div class="app cur"><svg viewBox="0 0 36 36"><rect width="36" height="36" fill="#0078d7"/><path d="M19 0H31V36H19Z" fill="#cf8f0e"/><path d="M12 9H25V36H12Z" fill="#ecb91f"/><path d="M5 18H17V36H5Z" fill="#ffdf6e"/></svg></div>
  </div>
  <div class="tray">
    <svg class="up" width="18" height="10" viewBox="0 0 18 10"><path d="M1 9L9 1.500L17 9" fill="none" stroke="#252423" stroke-width="1.800"/></svg>
    <svg class="cloud" width="24" height="17" viewBox="0 0 24 17"><path d="M6 16C-1 16-1 7 5 7C7-1 17-1 18 7C25 7 25 16 18 16Z" fill="#e8e4e4" stroke="#252423" stroke-width="1.600"/><path d="M6 7C8 1 15 0 17 7L10 10C8 8 6 8 2 10Z" fill="#8a8886"/></svg>
    <div class="lang">ENG<br>IN</div>
    <svg class="wifi" width="24" height="18" viewBox="0 0 24 18" fill="none" stroke="#252423" stroke-width="1.700"><path d="M1 6C7-1 17-1 23 6" stroke="#aaa5a4"/><path d="M4 9C9 3 15 3 20 9M7.500 12C10 9 14 9 16.500 12"/><circle cx="12" cy="15" r="1.500" fill="#252423"/></svg>
    <svg class="snd" width="25" height="20" viewBox="0 0 25 20" fill="none" stroke="#252423" stroke-width="1.500"><path d="M1 7H5L10 2V18L5 13H1Z"/><path d="M13 6C15 8 15 12 13 14"/><path d="M17 4C20 7 20 13 17 16M20 1C25 6 25 14 20 19" stroke="#aaa5a4"/></svg>
    <svg class="bat" width="25" height="16" viewBox="0 0 25 16"><rect x="1" y="1" width="20" height="14" rx="3" fill="none" stroke="#252423" stroke-width="1.600"/><path d="M3.500 4h4v8h-4ZM22 5h2v6h-2Z" fill="#252423"/></svg>
    <div class="clock">22:17<br>24-03-2024</div>
    <svg class="bell" width="20" height="24" viewBox="0 0 20 24" fill="#003e92"><path d="M3 16V8C3-2 17-2 17 8V16L20 19H0ZM6 20.500H14C13 24 7 24 6 20.500Z"/></svg>
    <svg class="pre" width="36" height="36" viewBox="0 0 36 36"><defs><linearGradient id="c1" x2=".2" y2="1"><stop stop-color="#16b6f2"/><stop offset=".5" stop-color="#38ae6a"/><stop offset="1" stop-color="#f5c518"/></linearGradient><linearGradient id="c2" x2="0" y2="1"><stop stop-color="#9256f4"/><stop offset="1" stop-color="#ff5c87"/></linearGradient></defs><path d="M19 9H34C36 13 32 20 29 24C28 26 25 26 22 26H10Z" fill="url(#c2)"/><path d="M8 1H20C24 1 21 10 17 21C16 24 14 25 10 25H3C-2 22 2 6 8 1Z" fill="url(#c1)"/><path d="M18 0H22C25 1 26 7 28 9H20Z" fill="#1451d8"/><rect x="8" y="24" width="28" height="11" rx="3" fill="#ffc600"/><text x="12" y="33" class="pretxt" textLength="20">PRE</text></svg>
  </div>
</div>
</body>
</html>
```
FILE: styles.css
```css
* { box-sizing: border-box; }
body { margin: 0; width: 1920px; height: 1080px; overflow: hidden; display: flex; flex-direction: column; font-family: "Open Sans", "Noto Sans", sans-serif; font-size: 17px; color: #323130; background: #f3f2f1; white-space: nowrap; }
svg { display: block; flex: none; }
.defs { position: absolute; }
h2 { margin: 0; font-size: 22.300px; font-weight: 600; color: #252423; }

.titlebar { height: 51px; flex: none; background: #3b3a38; color: #fff; display: grid; grid-template-columns: 753px 1fr auto auto; align-items: center; padding-right: 24px; }
.quick { display: flex; gap: 21px; padding: 2px 0 0 25px; }
.redo { margin-left: -1px; }
.doc-title { font-size: 17px; letter-spacing: -.06px; padding-top: 1px; }
.account { display: flex; align-items: center; gap: 15px; font-size: 17px; letter-spacing: .1px; }
.winctl { display: flex; gap: 48px; padding: 4px 0 0 46px; }

.tabs { height: 47px; flex: none; background: #fafafa; display: flex; font-size: 19.800px; line-height: 50px; color: #252423; }
.tab { letter-spacing: -.1px; text-align: center; height: 47px; }
.tab b { display: inline-block; height: 47px; border-bottom: 5px solid #117865; font-weight: 700; width: 58px; letter-spacing: -.5px; }
.t-file { width: 99px; }
.t-home { width: 102px; }
.t-insert { width: 100px; }
.t-model { width: 134px; }
.t-view { width: 94px; }
.t-opt { width: 128px; }
.t-help { width: 93px; }
.ctx { background: #fff; font-weight: 600; color: #0b4a42; }
.t-format { width: 113px; letter-spacing: -.2px; }
.t-drill { width: 148px; margin-left: 6px; letter-spacing: -.1px; }
.share-btn { margin: 6px 9px 0 auto; width: 125px; height: 36px; border-radius: 5px; background: #117865; color: #fff; display: flex; align-items: center; font-size: 17.200px; padding: 0 12px 0 10px; line-height: 37px; }
.share-btn span { margin: 0 7px 0 11px; }

.ribbon { height: 142px; flex: none; background: #fafafa; display: flex; padding-top: 7px; position: relative; z-index: 2; box-shadow: 0 2px 6px rgba(0,0,0,.25); }
.group { height: 133px; border-right: 1px solid #d2d0ce; display: flex; flex-direction: column; justify-content: space-between; }
.tools { display: flex; justify-content: center; padding-top: 5px; }
.cap { text-align: center; font-size: 14px; line-height: 17px; color: #484644; letter-spacing: -.05px; }
.g-clip { width: 240px; }
.g-data { width: 550px; }
.g-query { width: 173px; }
.g-insert { width: 220px; }
.g-calc { width: 170px; }
.g-sens { width: 109px; }
.g-share { width: 88px; }
.g-clip .tools { justify-content: flex-start; padding-left: 7px; }
.g-query .tools { justify-content: flex-start; padding-left: 14px; }
.g-insert .tools { justify-content: flex-start; padding-left: 11px; }
.btn { display: flex; flex-direction: column; align-items: center; font-size: 16.800px; line-height: 24px; text-align: center; color: #323130; flex: none; }
.btn > svg { width: 54px; height: 54px; }
.btn > span { margin-top: -1px; }
.g-query .btn > span { letter-spacing: -.15px; }
.off > span { color: #c8c6c4; }
.dd { display: inline-block; width: 10px; height: 8px; margin-left: 3px; vertical-align: 0; }
.dd.solo { margin-left: 0; color: #a19f9d; }
.b-paste { width: 70px; }
.w52 { width: 52px; } .w58 { width: 58px; } .w62 { width: 62px; } .w68 { width: 68px; } .w70 { width: 70px; }
.w73 { width: 73px; } .w74 { width: 74px; } .w80 { width: 80px; } .w86 { width: 86px; } .w92 { width: 92px; } .w104 { width: 104px; } .w108 { width: 108px; }
.cliplist { font-size: 16.800px; margin-top: -5px; }
.cliplist div { display: flex; align-items: center; gap: 6px; height: 36px; margin-left: 1px; }
.collapse { margin: 115px 7px 0 auto; }

.main { height: 732px; flex: none; display: grid; grid-template-columns: 61px 1317px 272px 270px; position: relative; }
.rail { border-right: 1px solid #d8d6d4; }
.rail-item { height: 60px; display: flex; align-items: center; justify-content: center; padding-left: 2px; }
.rail-item.on { border-left: 4px solid #117865; padding: 0 3px 1px 0; }
.rail-item + .rail-item { height: 56px; }
.rail-item:last-child { height: 66px; }
.center { display: flex; flex-direction: column; }
.workspace { height: 680px; display: grid; grid-template-columns: 1016px 301px; background: #fff; }
.canvas { position: relative; overflow: hidden; }
.slicer { position: absolute; left: 582px; top: 5px; }
.slicer-title { font-size: 12.700px; line-height: 20px; color: #252423; }
.slicer-row { display: flex; gap: 6.500px; margin-top: 1px; }
.slicer-row span { width: 80px; height: 71px; border-radius: 20px; background: #e6e6e6; display: flex; align-items: center; justify-content: center; font-size: 12.500px; color: #252423; padding-top: 2px; }
.slicer-row .on { background: #744ec2; color: #fff; font-weight: 700; }
.kpi { position: absolute; width: 140px; text-align: center; }
.kpi strong { display: block; font: 400 42.500px/44px Roboto, sans-serif; color: #252423; }
.kpi span { display: block; font-size: 12.700px; line-height: 18px; margin-top: 3px; color: #605e5c; }
.k1 { left: 696px; top: 134px; }
.k2 { left: 866px; top: 136px; }
.k3 { left: 696px; top: 263px; }
.k4 { left: 866px; top: 262px; }
.donut { position: absolute; left: 77px; top: 76px; }
.v-title { font: 12.500px Roboto, sans-serif; fill: #252423; }
.lbl { font-size: 9.500px; fill: #605e5c; }
.lgd { font-size: 10.700px; fill: #605e5c; }
.lgd .b { font-weight: 600; }
.page-edge { position: absolute; left: 2px; right: 1px; top: 571px; height: 3px; background: repeating-linear-gradient(90deg, #555 0 3px, transparent 3px 6px); }

.filters { border-left: 1px solid #b3b0ad; overflow: hidden; }
.f-head { display: flex; align-items: center; padding: 9px 14px 0 17px; height: 48px; }
.f-head h2 { margin-left: 11px; flex: 1; }
.eye { margin-right: 26px; }
.f-search { margin: 20px 17px 0 12px; height: 46px; border: 1px solid #979593; border-radius: 3px; display: flex; align-items: center; gap: 20px; padding: 0 0 2px 15px; color: #484644; font-size: 17.500px; }
.f-body { margin-top: 6px; border-top: 1px solid #b3b0ad; padding: 24px 12px 0 12px; height: 560px; position: relative; font-size: 16.950px; color: #3b3a39; }
.f-body::after { content: ""; position: absolute; right: 0; top: 13px; width: 9px; height: 560px; border-radius: 5px; background: #d8d6d4; }
.f-title { height: 38px; line-height: 26px; display: flex; justify-content: space-between; padding-right: 3px; }
.f-title.gap { margin-top: 39px; }
.f-title i { font-style: normal; letter-spacing: 2px; margin-top: -1px; }
.card { height: 68px; border: 1px solid #c8c6c4; border-radius: 3px; padding: 5px 12px; line-height: 27px; margin-bottom: 9px; }
.card.add { text-align: center; line-height: 56px; }
.pagebar { height: 52px; display: flex; align-items: flex-start; }
.desk { margin: 8px 0 0 15px; }
.phone { margin: 6px 0 0 38px; }
.prev { margin: 20px 0 0 32px; }
.page-tab { margin-left: 11px; width: 113px; height: 52px; background: #fff; border-left: 1px solid #a19f9d; border-right: 1px solid #a19f9d; border-bottom: 6px solid #117865; text-align: center; font-size: 17px; font-weight: 600; line-height: 52px; color: #252423; letter-spacing: -.3px; }
.page-add { width: 59px; height: 48px; margin-top: 2px; background: #117865; display: flex; align-items: center; justify-content: center; }

.viz { border-left: 1px solid #e1dfdd; border-right: 1px solid #d8d6d4; overflow: hidden; }
.p-head { display: flex; justify-content: space-between; align-items: center; height: 58px; padding: 0 11px 0 13px; }
.viz .p-head { padding-left: 12px; }
.build { padding-left: 12px; font-size: 17px; font-weight: 600; line-height: 22px; height: 24px; letter-spacing: -.2px; color: #252423; }
.modes { display: flex; margin: 4px 0 0 12px; gap: 51px; }
.mode { width: 48px; height: 48px; display: flex; align-items: center; justify-content: center; border-radius: 4px; }
.mode + .mode { padding-left: 3px; }
.mode.on { background: #d2d0ce; }
.notch { margin-top: 7px; }
.icons { display: grid; grid-template-columns: repeat(6, 28px); gap: 14px; margin: 15px 0 0 16px; }
.icons svg { width: 28px; height: 28px; }
.icons .over { overflow: visible; }
.icons .sel { outline: 1px solid #605e5c; outline-offset: 3px; background: #e1dfdd; box-shadow: 0 0 0 3px #e1dfdd; }
.i123 { font-size: 13.500px; fill: #1e8bcd; }
.ilet { font-size: 24px; font-weight: 700; fill: #2488c8; }
.wells { margin-top: 13px; border-top: 1px solid #d8d6d4; height: 257px; overflow: hidden; position: relative; padding: 1px 9px 0 6px; color: #3b3a39; }
.wells::after { content: ""; position: absolute; right: 0; top: 4px; width: 9px; height: 115px; border-radius: 5px; background: #d2d0ce; }
.well-name { height: 44px; line-height: 48px; padding-left: 12px; }
.well { height: 52px; border: 1px dashed #c8c6c4; background: #fff; padding: 3px; margin-bottom: 4px; }
.well.cut { height: 30px; }
.pill { height: 34px; border: 1px solid #c0bebc; border-radius: 3px; background: #edebe9; display: flex; align-items: center; padding: 0 6px; gap: 8px; line-height: 30px; }
.pill span { flex: 1; margin-top: -2px; }

.data .p-head { padding: 0 11px 0 12px; }
.d-search { margin: 10px 6px 0; height: 39px; border: 1px solid #605e5c; border-radius: 3px; display: flex; align-items: center; gap: 10px; padding: 1px 0 0 11px; color: #484644; font-size: 18px; }
.tree { padding: 14px 0 0 11px; color: #3b3a39; }
.root { display: flex; align-items: center; height: 36px; }
.root svg { margin-top: 6px; }
.root .c { margin: 0 6px 0 -1px; }
.root span { margin-left: -1px; }
.row { height: 36px; display: flex; align-items: center; }
.row i { flex: none; display: flex; align-items: center; }
.tw { width: 46px; padding-left: 26px; }
.cb { width: 18px; height: 18px; border: 1px solid #797775; border-radius: 3px; background: #fafafa; }
.cb.on { background: #117865; }
.cb.on::after { content: ""; width: 11px; height: 6px; margin: -3px 0 0 2px; border: solid #fff; border-width: 0 0 2px 2px; transform: rotate(-45deg); }
.ic { width: 39px; padding-left: 12px; }

.tooltip { position: absolute; z-index: 3; left: 1193px; top: 606px; width: 176px; height: 47px; background: #fff; border-radius: 3px; box-shadow: 0 8px 20px rgba(0,0,0,.25); font-weight: 700; font-size: 17px; line-height: 49px; text-align: center; color: #111; letter-spacing: .12px; }
.tooltip::after { content: ""; position: absolute; right: -14px; top: 14px; border-left: 14px solid #fff; border-top: 10px solid transparent; border-bottom: 10px solid transparent; }
.mark { position: absolute; z-index: 4; left: 1373px; top: 602px; }

.status { height: 38px; flex: none; border-top: 1px solid #d8d6d4; border-bottom: 3px solid #a9a5a4; box-shadow: inset 0 -1px #000; display: flex; align-items: center; padding: 0 26px 0 6px; color: #484644; font-size: 17.200px; }
.pg { flex: 1; padding-top: 2px; }
.pct { margin: 0 28px 0 17px; color: #605e5c; letter-spacing: -.4px; }

.taskbar { height: 70px; flex: none; background: linear-gradient(90deg, #e3dada, #e2d8d7 25%, #e8d8d6 55%, #dfd9d8 75%, #dfd9d9); display: grid; grid-template-columns: 470px 56px 328px 4px 462px 1fr; align-items: center; }
.widget { display: flex; align-items: center; gap: 6px; padding: 0 0 2px 30px; line-height: 24px; font-size: 17.200px; }
.widget svg { margin-top: -11px; }
.widget b, .widget span { display: block; font-weight: 400; color: #1b1a19; letter-spacing: -.1px; }
.widget span { color: #605e5c; }
.badge { font-size: 15px; fill: #fff; }
.win { margin-top: -1px; }
.t-search { height: 45px; margin-top: -1px; border-radius: 23px; background: #f7f3f2; border: 1px solid #cfc4c3; border-bottom: 2px solid #b9afae; display: flex; align-items: center; gap: 14px; padding-left: 15px; color: #605e5c; font-size: 18px; }
.apps { display: flex; grid-column: 5; }
.app { width: 66px; height: 58px; margin-top: -2px; display: flex; align-items: center; justify-content: center; position: relative; }
.app > svg { width: 36px; height: 36px; }
.app.run::after, .app.cur::after { content: ""; position: absolute; bottom: 0; width: 8px; height: 5px; border-radius: 3px; background: #7d7877; }
.app.cur { width: 56px; margin-left: 5px; background: #f1ecec; border-radius: 5px; box-shadow: 0 0 0 1px #dbd0cf; }
.app.cur::after { width: 24px; background: #0078d4; }
.tray { display: flex; align-items: center; justify-content: flex-end; padding: 0 30px 2px 0; color: #252423; font-size: 16.700px; line-height: 24px; }
.lang { text-align: center; margin: 0 27px; width: 36px; letter-spacing: -.4px; }
.up { margin-right: 27px; }
.wifi { margin-right: 12px; }
.snd { margin-right: 11px; }
.clock { text-align: right; margin: 0 12px 0 10px; width: 107px; font-size: 17.800px; letter-spacing: .15px; }
.bell { margin-right: 28px; }
.pretxt { font-size: 9.500px; font-weight: 700; fill: #111; }
```
